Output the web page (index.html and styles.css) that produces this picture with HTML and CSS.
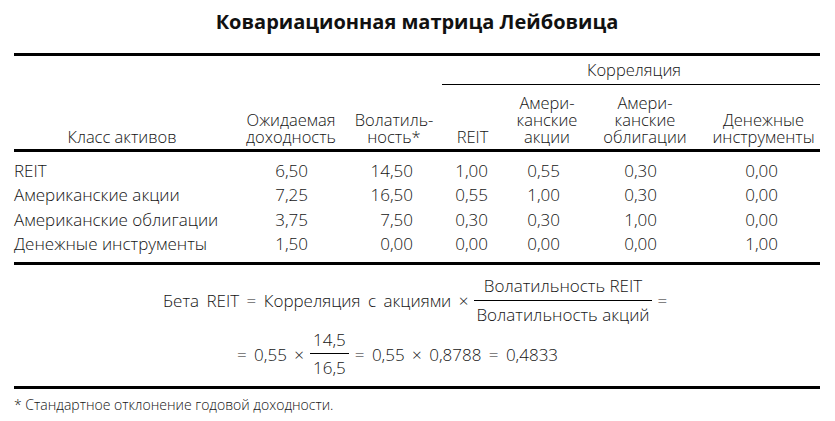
FILE: index.html
```html
<!DOCTYPE html>
<html lang="ru">
<head>
<meta charset="utf-8">
<link rel="stylesheet" href="styles.css">
</head>
<body>
<div class="page">
  <h1 class="title">Ковариационная матрица Лейбовица</h1>
  <div class="rule"></div>
  <div class="head">
    <div class="hc c-a">Класс активов</div>
    <div class="hc c-b">Ожидаемая<br>доходность</div>
    <div class="hc c-c">Волатиль-<br>ность*</div>
    <div class="corr">Корреляция</div>
    <div class="hc c-d">REIT</div>
    <div class="hc c-e">Амери-<br>канские<br>акции</div>
    <div class="hc c-f">Амери-<br>канские<br>облигации</div>
    <div class="hc c-g">Денежные<br>инструменты</div>
  </div>
  <div class="rule"></div>
  <div class="body">
    <div class="row">
      <div class="name">REIT</div><div class="n nb">6,50</div><div class="n nc">14,50</div><div class="n nd">1,00</div><div class="n ne">0,55</div><div class="n nf">0,30</div><div class="n ng">0,00</div>
    </div>
    <div class="row">
      <div class="name">Американские акции</div><div class="n nb">7,25</div><div class="n nc">16,50</div><div class="n nd">0,55</div><div class="n ne">1,00</div><div class="n nf">0,30</div><div class="n ng">0,00</div>
    </div>
    <div class="row">
      <div class="name">Американские облигации</div><div class="n nb">3,75</div><div class="n nc">7,50</div><div class="n nd">0,30</div><div class="n ne">0,30</div><div class="n nf">1,00</div><div class="n ng">0,00</div>
    </div>
    <div class="row">
      <div class="name">Денежные инструменты</div><div class="n nb">1,50</div><div class="n nc">0,00</div><div class="n nd">0,00</div><div class="n ne">0,00</div><div class="n nf">0,00</div><div class="n ng">1,00</div>
    </div>
  </div>
  <div class="rule"></div>
  <div class="formula">
    <div class="fline fl1">
      <span class="wide">Бета REIT = Корреляция с акциями ×</span>
      <span class="frac big"><span class="num">Волатильность REIT</span><span class="den">Волатильность акций</span></span>
      <span>=</span>
    </div>
    <div class="fline fl2">
      <span class="wide">= 0,55 ×</span>
      <span class="frac small"><span class="num">14,5</span><span class="den">16,5</span></span>
      <span class="wide">= 0,55 × 0,8788 = 0,4833</span>
    </div>
  </div>
  <div class="rule"></div>
  <p class="note">* Стандартное отклонение годовой доходности.</p>
</div>
</body>
</html>
```
FILE: styles.css
```css
html, body {
  margin: 0;
  padding: 0;
  background: #ffffff;
}
body {
  font-family: "Open Sans", "Noto Sans", "DejaVu Sans", sans-serif;
  font-weight: 350;
  color: #141414;
}
.page {
  width: 806px;
  margin-left: 14px;
}
.title {
  margin: 0;
  height: 53px;
  box-sizing: border-box;
  padding-top: 8px;
  text-align: center;
  font-size: 20px;
  font-weight: 700;
  line-height: 28px;
  color: #111;
}
.rule {
  height: 3px;
  background: #000;
}
.head {
  display: grid;
  grid-template-columns: 222px 110px 96px 61px 88px 108px 121px;
  grid-template-rows: 29px auto;
  height: 93px;
  font-size: 16.5px;
  line-height: 17px;
}
.hc {
  text-align: center;
  align-self: end;
  padding-bottom: 4px;
}
.c-a {
  grid-row: 1 / 3;
  padding-right: 6px;
}
.c-b, .c-c {
  grid-row: 1 / 3;
}
.corr {
  grid-column: 4 / 8;
  grid-row: 1;
  border-bottom: 1px solid #000;
  text-align: center;
  padding-left: 6px;
  line-height: 28px;
  box-sizing: border-box;
}
.c-g {
  padding-left: 8px;
}
.body {
  padding: 7px 0 6px;
  font-size: 17px;
  line-height: 24.3px;
}
.row {
  display: grid;
  grid-template-columns: 222px 110px 96px 61px 88px 108px 121px;
}
.n {
  text-align: right;
}
.nb { padding-right: 38px; }
.nc { padding-right: 29px; }
.nd { padding-right: 15px; }
.ne { padding-right: 31px; }
.nf { padding-right: 42px; }
.ng { padding-right: 42px; }
.formula {
  padding: 11px 0 8px;
  font-size: 17px;
}
.fline {
  display: flex;
  align-items: center;
  gap: 6px;
}
.wide {
  word-spacing: 3px;
}
.fl1 {
  padding-left: 149px;
}
.fl2 {
  padding-left: 223px;
  margin-top: 5px;
}
.frac {
  display: inline-flex;
  flex-direction: column;
  align-items: center;
  line-height: 20px;
}
.frac .num {
  border-bottom: 1px solid #000;
  align-self: stretch;
  text-align: center;
  padding: 0 2px 4px;
}
.frac .den {
  padding: 4px 2px 0;
}
.frac.small .num {
  padding: 0 3px 3px;
}
.note {
  margin: 0;
  padding-top: 7px;
  font-size: 14px;
  line-height: 18px;
}
```
